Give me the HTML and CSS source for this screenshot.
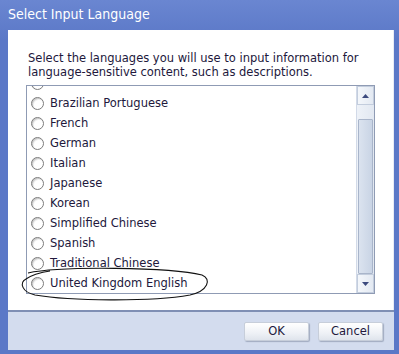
FILE: index.html
```html
<!doctype html>
<html lang="en">
<head>
    <meta charset="UTF-8">
    <title>Select Input Language</title>
    <link rel="stylesheet" href="styles.css">
</head>
<body>
    <div class="dialog">
        <div class="dialog-title">Select Input Language</div>

        <div class="dialog-body">
            <p class="intro">Select the languages you will use to input information for language-sensitive content, such as descriptions.</p>

            <div class="lang-box">
                <div class="lang-view">
                    <ul class="lang-list">
                        <li><span class="radio"></span></li>
                        <li><span class="radio"></span>Brazilian Portuguese</li>
                        <li><span class="radio"></span>French</li>
                        <li><span class="radio"></span>German</li>
                        <li><span class="radio"></span>Italian</li>
                        <li><span class="radio"></span>Japanese</li>
                        <li><span class="radio"></span>Korean</li>
                        <li><span class="radio"></span>Simplified Chinese</li>
                        <li><span class="radio"></span>Spanish</li>
                        <li><span class="radio"></span>Traditional Chinese</li>
                        <li><span class="radio"></span>United Kingdom English</li>
                    </ul>
                </div>

                <!-- scrollbar -->
                <div class="scrollbar">
                    <div class="sb-btn">
                        <svg width="7" height="4" viewBox="0 0 7 4"><path d="M0 4 L3.5 0 L7 4 Z" fill="#3c4a7e"/></svg>
                    </div>
                    <div class="sb-track">
                        <div class="sb-thumb"></div>
                    </div>
                    <div class="sb-btn">
                        <svg width="7" height="4" viewBox="0 0 7 4"><path d="M0 0 L3.5 4 L7 0 Z" fill="#3c4a7e"/></svg>
                    </div>
                </div>
            </div>
        </div>

        <div class="dialog-footer">
            <button>OK</button>
            <button>Cancel</button>
        </div>

        <!-- hand drawn mark round the last item -->
        <svg class="mark" width="190" height="34" viewBox="0 0 190 34">
            <path d="M8 6 C40 -1 150 0 182 8 C192 12 188 24 170 28 C130 35 50 34 15 28 C2 25 -1 16 6 12 C10 9 20 5 30 4"
                  fill="none" stroke="#111" stroke-width="1.1"/>
        </svg>
    </div>
</body>
</html>
```

FILE: styles.css
```css
body {
    margin: 0;
    padding: 0;
    background: #5b78c7;
}

.dialog {
    position: relative;
    width: 399px;
    height: 354px;
    box-sizing: border-box;
    padding: 0 5px 4px 8px;
    display: flex;
    flex-direction: column;
    background: linear-gradient(to bottom, #6a86d1, #5b78c7 40px);
    font-family: "DejaVu Sans", sans-serif;
}

.dialog-title {
    height: 31px;
    line-height: 31px;
    color: #fff;
    font-size: 14px;
    font-family: "DejaVu Sans Condensed", "DejaVu Sans", sans-serif;
    font-stretch: semi-condensed;
    white-space: nowrap;
    margin-top: -1px;
}

.dialog-body {
    flex: 1;
    background: #fff;
    padding: 21px 18px 16px 18px;
    border-right: 1px solid #e8ecf6;
    display: flex;
    flex-direction: column;
}

.intro {
    margin: 0 0 6px 2px;
    font-size: 11.5px;
    line-height: 14px;
    color: #22183c;
}

.lang-box {
    flex: 1;
    display: flex;
    border: 1px solid #8f9bb4;
    overflow: hidden;
}

.lang-view {
    flex: 1;
    overflow: hidden;
}

.lang-list {
    list-style: none;
    margin: -13px 0 0 0;
    padding: 0;
}

.lang-list li {
    height: 20px;
    display: flex;
    align-items: center;
    gap: 6px;
    padding-left: 4px;
    font-size: 11.5px;
    color: #22183c;
}

.radio {
    width: 11px;
    height: 11px;
    border-radius: 50%;
    border: 1px solid #7c7c7c;
    background: radial-gradient(circle at 65% 65%, #fff 45%, #e6e6e6 75%, #c8c8c8);
    box-shadow: inset 1px 1px 1px rgba(0, 0, 0, 0.15);
}

/* Scrollbar */
.scrollbar {
    width: 17px;
    display: flex;
    flex-direction: column;
    background: #e4eaf3;
    border-left: 1px solid #d2dae8;
}

.sb-btn {
    height: 19px;
    display: flex;
    align-items: center;
    justify-content: center;
    background: linear-gradient(to right, #f4f7fb, #e3e9f2);
    border: 1px solid #c3cddd;
    box-sizing: border-box;
}

.sb-track {
    flex: 1;
    display: flex;
    flex-direction: column;
    padding-top: 14px;
    background: linear-gradient(to right, #eef2f8, #e2e8f1);
}

.sb-thumb {
    flex: 1;
    margin: 0 1px;
    border: 1px solid #a9b5ca;
    border-radius: 1px;
    background: linear-gradient(to right, #dbe3ef, #c9d4e5);
}

/* Footer */
.dialog-footer {
    height: 40px;
    border-top: 2px solid #7f8fb4;
    background: #d3dcee;
    display: flex;
    justify-content: flex-end;
    align-items: center;
    gap: 9px;
    padding-right: 11px;
}

.dialog-footer button {
    width: 65px;
    height: 19px;
    padding: 0;
    font-family: inherit;
    font-size: 11.5px;
    color: #22183c;
    border: 1px solid #c7ceda;
    border-radius: 2px;
    background: linear-gradient(to bottom, #ffffff, #eef1f6 60%, #dfe4ec);
    box-shadow: 1px 1px 1px rgba(70, 80, 110, 0.35);
}

.mark {
    position: absolute;
    left: 20px;
    top: 267px;
    overflow: visible;
}
```
